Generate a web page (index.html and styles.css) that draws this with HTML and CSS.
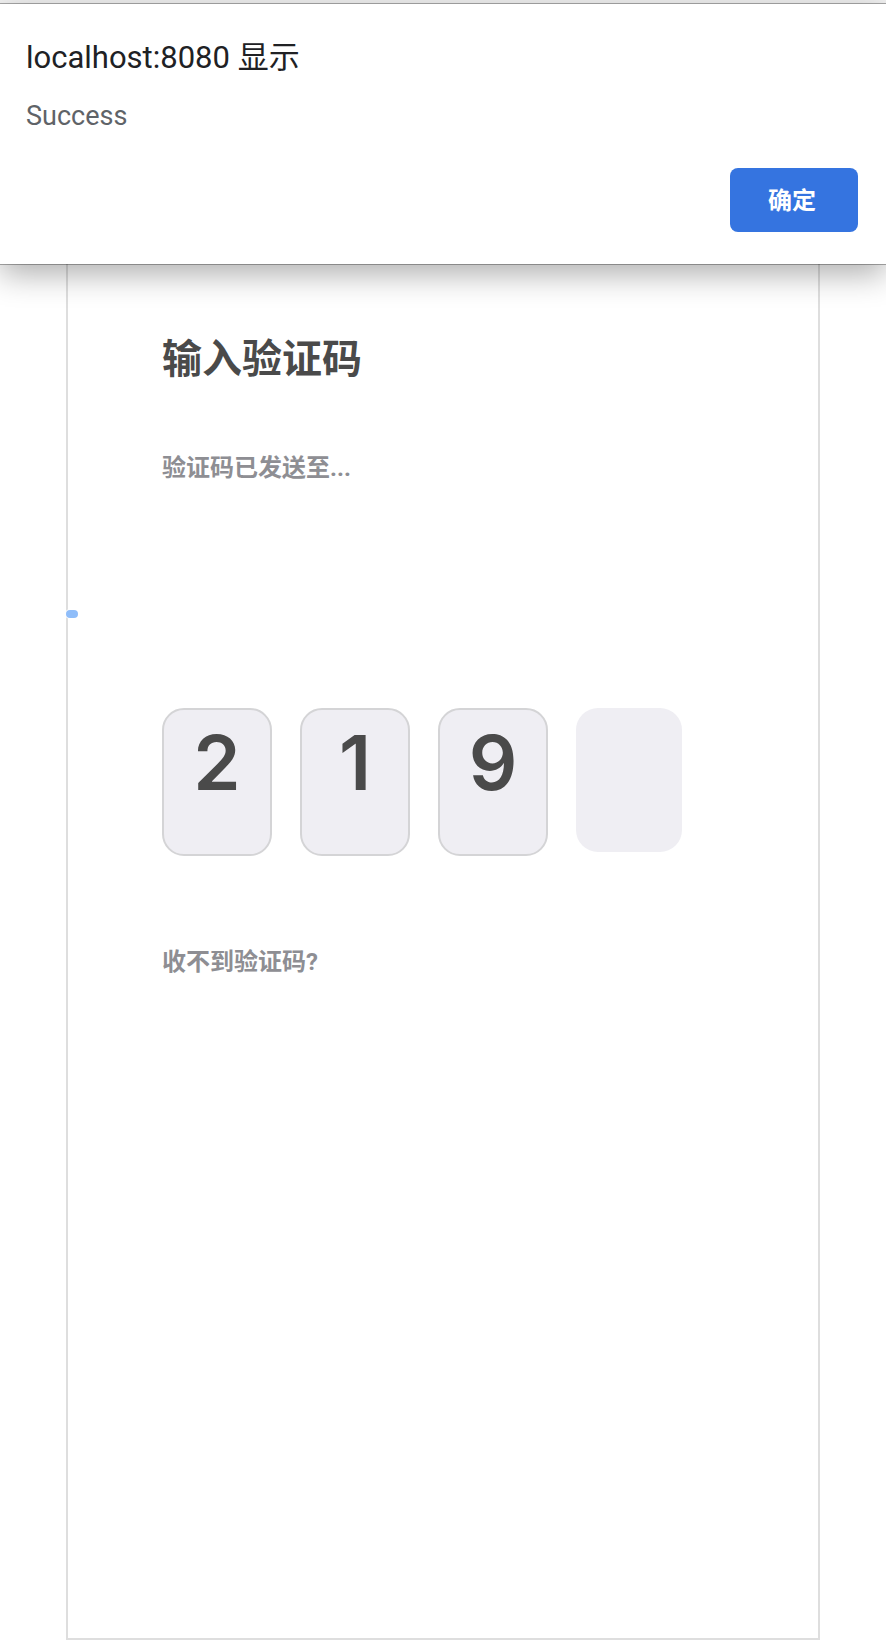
FILE: index.html
```
<!DOCTYPE html>
<html lang="zh-CN">
<head>
<meta charset="utf-8">
<meta name="viewport" content="width=device-width, initial-scale=1">
<title>输入验证码</title>
<link rel="stylesheet" href="styles.css">
</head>
<body>
<section class="dialog" role="alertdialog" aria-labelledby="dialog-title" aria-describedby="dialog-message">
  <h2 class="dialog-title" id="dialog-title">localhost:8080 显示</h2>
  <p class="dialog-message" id="dialog-message">Success</p>
  <div class="dialog-actions">
    <button class="confirm" type="button">确定</button>
  </div>
</section>
<main class="panel">
  <div class="content">
    <h1 class="title">输入验证码</h1>
    <p class="hint">验证码已发送至...</p>
  </div>
  <input class="catcher" type="tel" aria-label="验证码">
  <div class="content">
    <div class="cells">
      <input class="cell filled" type="text" maxlength="1" value="2" aria-label="第 1 位">
      <input class="cell filled" type="text" maxlength="1" value="1" aria-label="第 2 位">
      <input class="cell filled" type="text" maxlength="1" value="9" aria-label="第 3 位">
      <input class="cell" type="text" maxlength="1" aria-label="第 4 位">
    </div>
    <p class="hint">收不到验证码?</p>
  </div>
</main>
</body>
</html>
```
FILE: styles.css
```
* {
  box-sizing: border-box;
}

body {
  margin: 0;
  border-top: 4px solid #f2f2f2;
  overflow-x: hidden;
  background: #fff;
  font-family: Roboto, "Noto Sans CJK SC", sans-serif;
}

/* Browser alert, laid over the page */
.dialog {
  position: absolute;
  top: 4px;
  left: 0;
  right: 0;
  padding: 32px 28px;
  padding-left: 26px;
  background: #fff;
  box-shadow: 0 0 0 1px rgba(0, 0, 0, 0.3), 0 10px 30px rgba(0, 0, 0, 0.32);
}

.dialog-title {
  margin: 0;
  font-size: 31px;
  line-height: 44px;
  font-weight: 400;
  color: #202124;
}

.dialog-message {
  margin: 18px 0 0;
  font-size: 27px;
  line-height: 36px;
  color: #5f6368;
}

.dialog-actions {
  display: flex;
  justify-content: flex-end;
  margin-top: 34px;
}

.confirm {
  width: 128px;
  height: 64px;
  padding: 0 4px 4px 0;
  border: 0;
  border-radius: 8px;
  background: #3574e0;
  color: #fff;
  font: inherit;
  font-size: 24px;
  font-weight: 700;
}

.panel {
  margin: 0 66px 10px;
  padding: 328px 0 660px;
  border: solid #dedede;
  border-width: 0 2px 2px;
}

.content {
  padding: 0 94px;
}

.title {
  margin: 0 0 64px;
  font-size: 40px;
  line-height: 56px;
  font-weight: 700;
  color: #4a4a4a;
}

.hint {
  margin: 0;
  font-size: 24px;
  line-height: 32px;
  font-weight: 700;
  color: #8e8e93;
}

/* Collapsed field that receives the typed code */
.catcher {
  display: block;
  width: 12px;
  height: 8px;
  margin: 126px 0 90px -2px;
  padding: 0;
  border: 0;
  border-radius: 4px;
  outline: 0;
  background: #8fbdf9;
  box-shadow: 0 0 0 1px #fff;
}

.cells {
  display: flex;
  align-items: flex-start;
  gap: 28px;
  margin-bottom: 90px;
}

.cell {
  width: 106px;
  height: 144px;
  padding: 0 0 40px;
  border: 0;
  border-radius: 22px;
  outline: 0;
  background: #efeef3;
  color: #4a4a4a;
  font-family: Inter, "Liberation Sans", sans-serif;
  font-size: 76px;
  font-weight: 600;
  text-align: center;
}

.filled {
  width: 110px;
  height: 148px;
  border: 2px solid #d4d4d6;
}
```
